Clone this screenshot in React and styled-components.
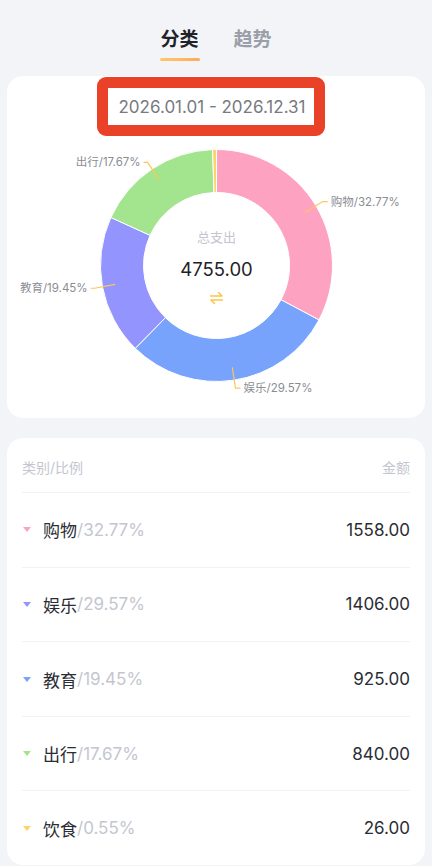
import React from 'react'
import styled, { createGlobalStyle } from 'styled-components'

const GlobalStyle = createGlobalStyle`
  html, body {
    margin: 0;
    padding: 0;
    background: #f3f4f8;
    font-family: Inter, "Noto Sans CJK SC", sans-serif;
  }
`

const data = [
  { name: '购物', pct: 32.77, amount: '1558.00', color: '#fda3c1' },
  { name: '娱乐', pct: 29.57, amount: '1406.00', color: '#9394fe', slice: '#78a3fc' },
  { name: '教育', pct: 19.45, amount: '925.00', color: '#78a3fc', slice: '#9394fe' },
  { name: '出行', pct: 17.67, amount: '840.00', color: '#a3e48f' },
  { name: '饮食', pct: 0.55, amount: '26.00', color: '#fcd46a' },
]

// chart geometry (svg coords)
const CX = 209.5
const CY = 129.5
const R_OUT = 116
const R_IN = 73

const Page = styled.div`
  padding: 0 7px;
  box-sizing: border-box;
  width: 432px;
  height: 866px;
  overflow: hidden;
`

const Tabs = styled.div`
  height: 76px;
  display: flex;
  justify-content: center;
  gap: 33px;
  padding-top: 26px;
  box-sizing: border-box;
`

const Tab = styled.div`
  display: flex;
  flex-direction: column;
  align-items: center;
  font-size: 19px;
  font-weight: 700;
  line-height: 28px;
  color: ${(p) => (p.active ? '#1f2329' : '#9a9ea8')};
  &::after {
    content: '';
    display: block;
    width: 40px;
    height: 3px;
    border-radius: 2px;
    margin-top: 4px;
    background: ${(p) => (p.active ? 'linear-gradient(90deg, #ffc76c, #ffab5a)' : 'transparent')};
  }
`

const Card = styled.div`
  background: #fff;
  border-radius: 16px;
  display: flex;
  flex-direction: column;
`

const ChartCard = styled(Card)`
  height: 342px;
  align-items: center;
  padding-top: 1px;
  box-sizing: border-box;
`

const DateRange = styled.div`
  width: 228px;
  height: 59px;
  margin-right: 10px;
  box-sizing: border-box;
  border: 11px solid #ea4229;
  border-radius: 9px;
  display: flex;
  align-items: center;
  justify-content: center;
  font-size: 17px;
  color: #777a80;
  padding-left: 2px;
  white-space: nowrap;
`

const ListCard = styled(Card)`
  margin-top: 20px;
  padding: 0 15px;
  height: 427px;
`

const HeaderRow = styled.div`
  display: flex;
  justify-content: space-between;
  align-items: center;
  height: 55px;
  padding-top: 3px;
  box-sizing: border-box;
  font-size: 14px;
  color: #c4c6cf;
`

const Row = styled.div`
  display: flex;
  align-items: center;
  height: 75px;
  border-top: 1px solid #f2f2f5;
  font-size: 17px;
`

const Marker = styled.span`
  width: 0;
  height: 0;
  border-left: 4px solid transparent;
  border-right: 4px solid transparent;
  border-top: 5px solid ${(p) => p.color};
  margin: 0 12px 0 1px;
`

const Name = styled.span`
  color: #2a2d33;
`

const Pct = styled.span`
  color: #c4c6cf;
`

const Amount = styled.span`
  margin-left: auto;
  color: #2a2d33;
`

const polar = (r, deg) => {
  const a = ((deg - 90) * Math.PI) / 180
  return [CX + r * Math.cos(a), CY + r * Math.sin(a)]
}

const arcPath = (a0, a1) => {
  const [x0, y0] = polar(R_OUT, a0)
  const [x1, y1] = polar(R_OUT, a1)
  const [x2, y2] = polar(R_IN, a1)
  const [x3, y3] = polar(R_IN, a0)
  const large = a1 - a0 > 180 ? 1 : 0
  return `M${x0} ${y0} A${R_OUT} ${R_OUT} 0 ${large} 1 ${x1} ${y1} L${x2} ${y2} A${R_IN} ${R_IN} 0 ${large} 0 ${x3} ${y3} Z`
}

const Donut = () => {
  let acc = 0
  const slices = data.map((d) => {
    const a0 = acc * 3.6
    acc += d.pct
    const a1 = acc * 3.6
    return { ...d, a0, a1, mid: (a0 + a1) / 2 }
  })
  return (
    <svg width="418" height="282" viewBox="0 0 418 282">
      {slices.map((s) => (
        <path key={s.name} d={arcPath(s.a0, s.a1)} fill={s.slice || s.color} stroke="#fff" strokeWidth="1" />
      ))}
      {slices.filter((s) => s.pct > 1).map((s) => {
        const [x0, y0] = polar(103, s.mid)
        const [x1, y1] = polar(124, s.mid)
        const right = s.mid < 180
        const x2 = x1 + (right ? 5 : -4)
        return (
          <g key={s.name + 'l'}>
            <polyline points={`${x0},${y0} ${x1},${y1} ${x2},${y1}`} fill="none" stroke="#fcc75a" strokeWidth="1.2" />
            <text
              x={x2 + (right ? 3 : -3)}
              y={y1 + 4}
              fontSize="11.5"
              fill="#8a8d94"
              textAnchor={right ? 'start' : 'end'}
            >
              {s.name}/{s.pct.toFixed(2)}%
            </text>
          </g>
        )
      })}
      <text x={CX} y={CY - 24} fontSize="13" fill="#c3c5ce" textAnchor="middle">总支出</text>
      <text x={CX} y={CY + 10} fontSize="18.5" fill="#1f2329" textAnchor="middle">4755.00</text>
      <g transform={`translate(${CX - 6} ${CY + 27})`} fill="none" stroke="#fcc44a" strokeWidth="1.5" strokeLinecap="round" strokeLinejoin="round">
        <path d="M0 3.5 H11.5 L8 0" />
        <path d="M12 7.5 H0.5 L4 11" />
      </g>
    </svg>
  )
}

export default function App() {
  return (
    <Page>
      <GlobalStyle />
      <Tabs>
        <Tab active>分类</Tab>
        <Tab>趋势</Tab>
      </Tabs>
      <ChartCard>
        <DateRange>2026.01.01 - 2026.12.31</DateRange>
        <Donut />
      </ChartCard>
      <ListCard>
        <HeaderRow>
          <span>类别/比例</span>
          <span>金额</span>
        </HeaderRow>
        {data.map((d) => (
          <Row key={d.name}>
            <Marker color={d.color} />
            <Name>{d.name}</Name>
            <Pct>/{d.pct.toFixed(2)}%</Pct>
            <Amount>{d.amount}</Amount>
          </Row>
        ))}
      </ListCard>
    </Page>
  )
}
